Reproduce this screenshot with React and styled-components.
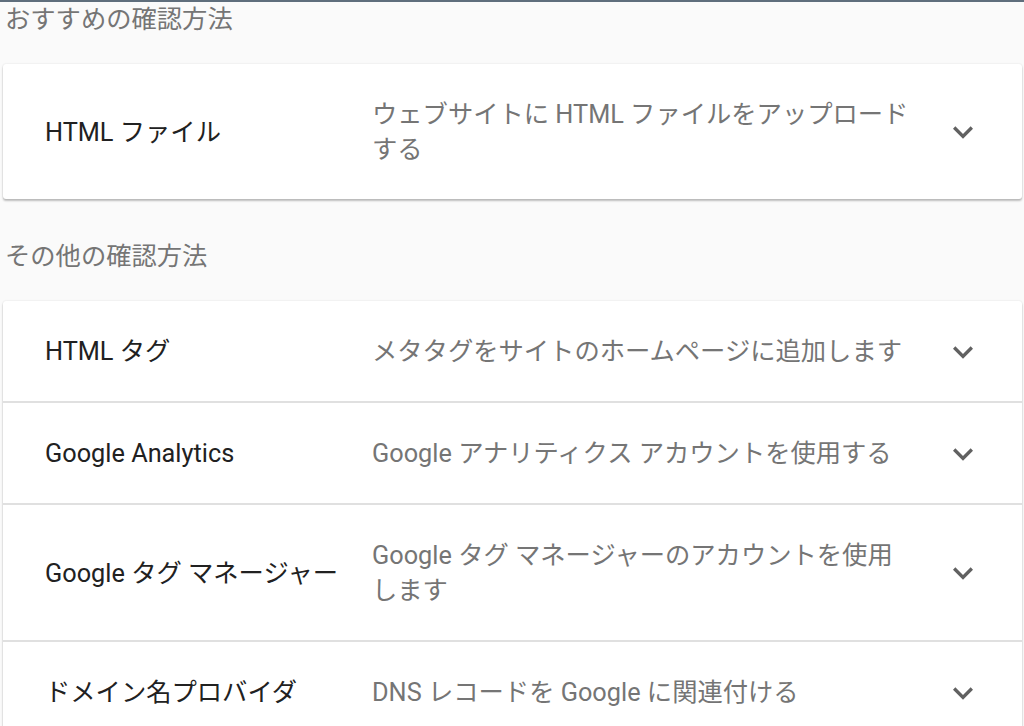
import React from "react";
import styled, { createGlobalStyle } from "styled-components";

const GlobalStyle = createGlobalStyle`
  html, body {
    margin: 0;
    padding: 0;
    background: #fafafa;
  }
  body {
    font-family: Roboto, "Noto Sans CJK JP", sans-serif;
    -webkit-font-smoothing: antialiased;
  }
`;

const Page = styled.div`
  border-top: 2px solid #5f6e7c;
  padding: 0 2px 0 3px;
  min-height: 724px;
  overflow: hidden;
`;

const SectionTitle = styled.h2`
  margin: ${(p) => (p.$first ? "0" : "40px")} 0 27px 2px;
  font-size: 25.3px;
  line-height: 35px;
  font-weight: 400;
  color: #757575;
`;

const Card = styled.div`
  background: #fff;
  border-radius: 3px;
  box-shadow: 0 2px 2px rgba(0, 0, 0, 0.24), 0 0 2px rgba(0, 0, 0, 0.12);
`;

const Row = styled.div`
  display: grid;
  grid-template-columns: 327px 537px 1fr;
  align-items: center;
  padding: 33px 0 32px 42px;
  border-bottom: 2px solid #e0e0e0;
  &:last-child {
    border-bottom: none;
  }
`;

const Title = styled.div`
  font-size: 25.3px;
  line-height: 35px;
  color: #212121;
  white-space: nowrap;
`;

const Desc = styled.div`
  font-size: 25.3px;
  line-height: 35px;
  color: #757575;
`;

const ChevronBox = styled.div`
  display: flex;
  align-items: center;
  height: 35px;
  padding-left: 34px;
  color: #616161;
  svg {
    display: block;
    flex: none;
  }
`;

const Chevron = () => (
  <ChevronBox>
    <svg width="40" height="40" viewBox="0 0 24 24" fill="currentColor">
      <path d="M16.59 8.59L12 13.17 7.41 8.59 6 10l6 6 6-6z" />
    </svg>
  </ChevronBox>
);

const Method = ({ title, desc }) => (
  <Row>
    <Title>{title}</Title>
    <Desc>{desc}</Desc>
    <Chevron />
  </Row>
);

const others = [
  { title: "HTML タグ", desc: "メタタグをサイトのホームページに追加します" },
  { title: "Google Analytics", desc: "Google アナリティクス アカウントを使用する" },
  { title: "Google タグ マネージャー", desc: "Google タグ マネージャーのアカウントを使用します" },
  { title: "ドメイン名プロバイダ", desc: "DNS レコードを Google に関連付ける" },
];

export default function App() {
  return (
    <>
      <GlobalStyle />
      <Page>
        <SectionTitle $first>おすすめの確認方法</SectionTitle>
        <Card>
          <Method title="HTML ファイル" desc="ウェブサイトに HTML ファイルをアップロードする" />
        </Card>
        <SectionTitle>その他の確認方法</SectionTitle>
        <Card>
          {others.map((m) => (
            <Method key={m.title} {...m} />
          ))}
        </Card>
      </Page>
    </>
  );
}
